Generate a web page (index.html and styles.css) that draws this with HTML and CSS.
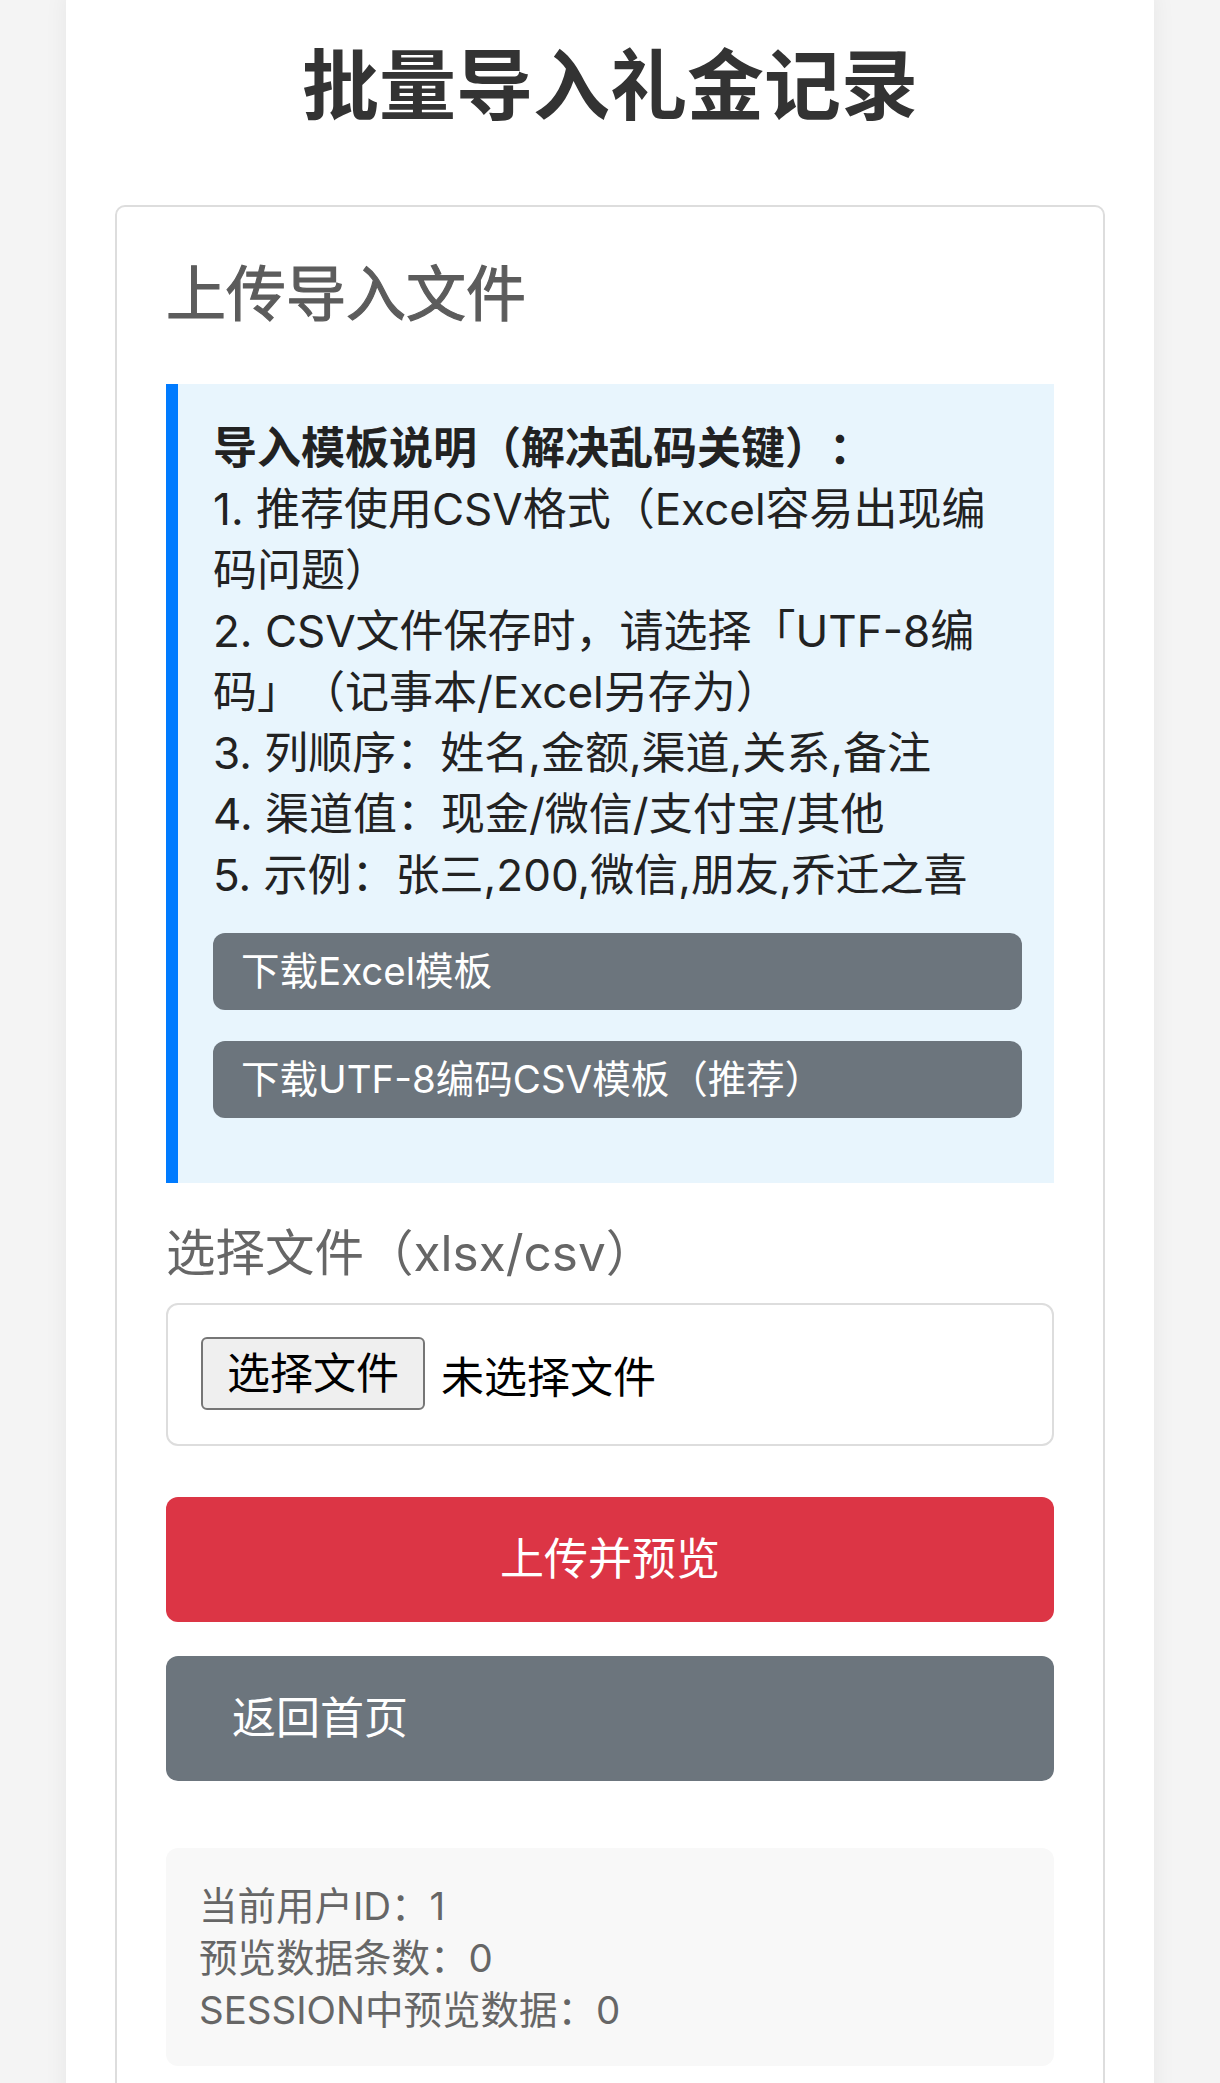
FILE: index.html
```html
<!DOCTYPE html>
<html lang="zh-CN">
<head>
    <meta charset="UTF-8">
    <meta name="viewport" content="width=device-width, initial-scale=1.0">
    <title>批量导入礼金记录</title>
    <link rel="stylesheet" href="styles.css">
</head>
<body>
    <div class="container">
        <h1>批量导入礼金记录</h1>

        <div class="card">
            <h2>上传导入文件</h2>

            <div class="tips">
                <div class="tips-text">
                    <p class="tips-title">导入模板说明（解决乱码关键）：</p>
                    <p>1. 推荐使用CSV格式（Excel容易出现编码问题）</p>
                    <p>2. CSV文件保存时，请选择「UTF-8编码」（记事本/Excel另存为）</p>
                    <p>3. 列顺序：姓名,金额,渠道,关系,备注</p>
                    <p>4. 渠道值：现金/微信/支付宝/其他</p>
                    <p>5. 示例：张三,200,微信,朋友,乔迁之喜</p>
                </div>
                <a class="tpl-btn" href="#">下载Excel模板</a>
                <a class="tpl-btn" href="#">下载UTF-8编码CSV模板（推荐）</a>
            </div>

            <form class="upload-form" onsubmit="return false;">
                <label class="field-label" for="file">选择文件（xlsx/csv）</label>
                <div class="file-box">
                    <label class="file-btn" for="file">选择文件</label>
                    <span class="file-name">未选择文件</span>
                    <input type="file" id="file" name="file" accept=".xlsx,.csv">
                </div>
                <button type="submit" class="btn btn-danger">上传并预览</button>
                <a class="btn btn-secondary" href="#">返回首页</a>
            </form>

            <div class="debug">
                <p>当前用户ID：1</p>
                <p>预览数据条数：0</p>
                <p>SESSION中预览数据：0</p>
            </div>
        </div>
    </div>
</body>
</html>
```

FILE: styles.css
```css
body {
    margin: 0;
    padding: 0;
    background-color: #f4f4f4;
    font-family: Inter, "Noto Sans CJK SC", sans-serif;
    color: #333;
    text-spacing-trim: space-all;
}
p {
    margin: 0;
}
.container {
    width: 1088px;
    box-sizing: border-box;
    margin: -12px auto 0;
    padding: 52px 49px 40px;
    background: #ffffff;
    border-radius: 14px;
    box-shadow: 0 0 24px rgba(0, 0, 0, 0.06);
}
.container h1 {
    margin: 0 0 73px;
    font-size: 77px;
    line-height: 92px;
    font-weight: bold;
    color: #333;
    text-align: center;
}
.card {
    border: 2px solid #dddddd;
    border-radius: 10px;
    padding: 51px 49px 50px;
}
.card h2 {
    margin: 0 0 54px;
    font-size: 60px;
    line-height: 72px;
    font-weight: normal;
    color: #5c5c5c;
    -webkit-text-stroke: 1.2px #5c5c5c;
}
.tips {
    background: #e8f5fd;
    border-left: 12px solid #007bff;
    padding: 34px 32px 34px 35px;
    font-size: 44px;
    line-height: 61px;
    color: #222;
}
.tips-text {
    margin-right: 16px;
}
.tips-title {
    font-weight: bold;
}
.tpl-btn {
    display: block;
    margin: 27px 0 31px;
    padding: 0 28px;
    height: 77px;
    line-height: 77px;
    font-size: 38.5px;
    color: #ffffff;
    background: #6c757d;
    border-radius: 12px;
    text-decoration: none;
}
.field-label {
    display: block;
    margin: 36px 0 15px;
    font-size: 49.5px;
    line-height: 69px;
    color: #666;
}
.file-box {
    display: flex;
    align-items: center;
    gap: 16px;
    border: 2px solid #dddddd;
    border-radius: 12px;
    padding: 32px 33px 34px;
}
.file-box input {
    display: none;
}
.file-btn {
    display: block;
    height: 69px;
    line-height: 69px;
    padding: 0 24px;
    font-size: 43px;
    color: #000;
    background: #efefef;
    border: 2px solid #767676;
    border-radius: 6px;
    cursor: pointer;
}
.file-name {
    font-size: 43px;
    color: #000;
}
.btn {
    display: block;
    width: 100%;
    box-sizing: border-box;
    padding: 32px 66px;
    font-family: inherit;
    font-size: 44px;
    line-height: 61px;
    color: #ffffff;
    border: none;
    border-radius: 12px;
    text-decoration: none;
    cursor: pointer;
}
.btn-danger {
    margin-top: 51px;
    background: #dc3545;
    text-align: center;
}
.btn-secondary {
    margin-top: 34px;
    background: #6c757d;
}
.debug {
    margin-top: 67px;
    padding: 32px 33px 30px;
    background: #f8f8f8;
    border-radius: 12px;
    font-size: 38.5px;
    line-height: 52px;
    color: #666;
}
```
